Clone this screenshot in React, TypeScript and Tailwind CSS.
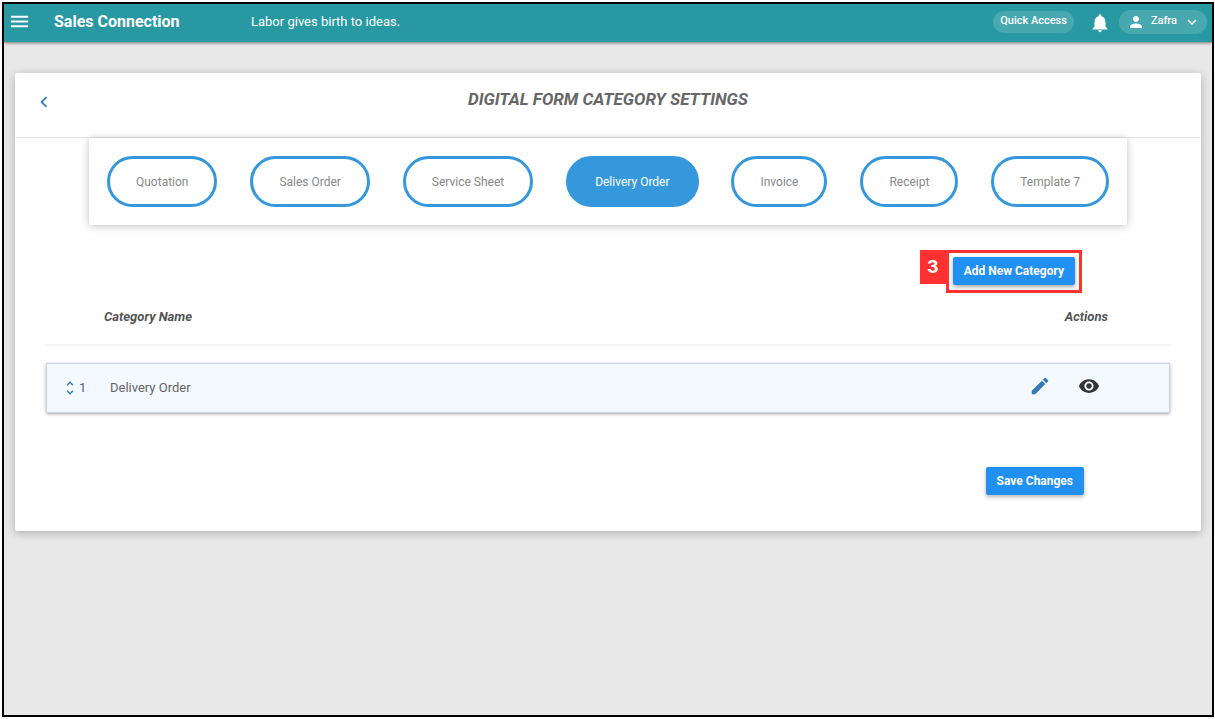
import React, { useState } from "react";
import {
  MdChevronLeft,
  MdEdit,
  MdExpandMore,
  MdMenu,
  MdNotifications,
  MdPerson,
  MdRemoveRedEye,
  MdUnfoldMore,
} from "react-icons/md";

const TABS = [
  "Quotation",
  "Sales Order",
  "Service Sheet",
  "Delivery Order",
  "Invoice",
  "Receipt",
  "Template 7",
];

const CATEGORIES = [{ id: 1, name: "Delivery Order" }];

const TopBar: React.FC = () => (
  <header className="relative flex h-[38px] items-center bg-[#2899a3] pb-[3px] pl-1 pr-[5px] text-white shadow-[0_1px_3px_rgba(0,0,0,0.5)]">
    <button type="button" aria-label="Menu" className="w-[46px]">
      <MdMenu size={23} />
    </button>
    <h1 className="w-[197px] text-base font-bold">Sales Connection</h1>
    <p className="flex-1 text-[13px]">Labor gives birth to ideas.</p>

    <button
      type="button"
      className="h-[22px] rounded-full bg-white/15 px-[7px] text-[11px] font-medium"
    >
      Quick Access
    </button>
    <button type="button" aria-label="Notifications" className="ml-[15px] mr-2 pt-0.5">
      <MdNotifications size={22} />
    </button>
    <button
      type="button"
      className="flex h-6 items-center rounded-full bg-white/15 pl-2 pr-1.5 text-[11px] font-medium"
    >
      <MdPerson size={18} />
      <span className="mx-1.5">Zafra</span>
      <MdExpandMore size={18} stroke="currentColor" />
    </button>
  </header>
);

const FormTabs: React.FC = () => {
  const [active, setActive] = useState("Delivery Order");

  return (
    <nav className="mx-[74px] flex justify-between rounded-b-xs bg-white px-[18px] py-[18px] shadow-[0_1px_8px_rgba(0,0,0,0.25)]">
      {TABS.map((tab) => (
        <button
          key={tab}
          type="button"
          onClick={() => setActive(tab)}
          className={`h-[51px] rounded-full border-3 border-[#3598dc] px-[26px] text-xs ${
            tab === active ? "bg-[#3598dc] text-white" : "bg-white text-[#888]"
          }`}
        >
          {tab}
        </button>
      ))}
    </nav>
  );
};

const CategoryTable: React.FC = () => (
  <table className="mx-[31px] block text-[13px]">
    <thead className="block">
      <tr className="flex h-[53px] justify-between border-b-2 border-[#f4f4f4] pl-[58px] pr-[62px] pt-[14px] italic text-[#555]">
        <th className="font-bold">Category Name</th>
        <th className="font-bold">Actions</th>
      </tr>
    </thead>
    <tbody className="block pt-[17px]">
      {CATEGORIES.map((category) => (
        <tr
          key={category.id}
          className="flex h-[50px] items-center border border-[#c5d5ee] bg-[#f4f8ff] text-[#666] shadow-[0_1px_3px_rgba(0,0,0,0.35)]"
        >
          <td className="flex w-[63px] items-center pl-[14px] text-[#4a5a96]">
            <MdUnfoldMore size={18} className="text-[#337ab7]" />
            {category.id}
          </td>
          <td className="flex-1">{category.name}</td>
          <td className="flex gap-[27px] pb-1 pr-[69px]">
            <button type="button" aria-label="Edit" className="text-[#337ab7]">
              <MdEdit size={22} />
            </button>
            <button type="button" aria-label="View" className="text-[#333]">
              <MdRemoveRedEye size={22} />
            </button>
          </td>
        </tr>
      ))}
    </tbody>
  </table>
);

export default function App() {
  return (
    <div className="min-h-screen bg-white pb-0.5 pl-0.5 pr-px pt-0.5 font-[Roboto,sans-serif]">
      <div className="min-h-[715px] border-2 border-black bg-[#e8e8e8]">
        <TopBar />

        <main className="mx-[11px] mt-[31px] rounded-xs bg-white pb-9 shadow-[0_2px_10px_rgba(0,0,0,0.25)]">
          <div className="flex h-[65px] items-center border-b border-[#e6e6e6] pb-1.5">
            <button type="button" aria-label="Back" className="w-[58px] pl-[18px] text-[#337ab7]">
              <MdChevronLeft size={22} />
            </button>
            <h2 className="flex-1 pb-1 pr-[58px] text-center text-[17px] font-bold italic text-[#666]">
              DIGITAL FORM CATEGORY SETTINGS
            </h2>
          </div>

          <FormTabs />

          {/* Add button with its numbered step marker */}
          <div className="mt-[25px] flex items-start justify-end pr-[119px]">
            <span className="flex h-[34px] w-[26px] items-center justify-center bg-[#ff3131] font-[Inter,sans-serif] text-lg font-bold text-white">
              3
            </span>
            <div className="border-3 border-[#ff3131] p-1 pb-[5px]">
              <button
                type="button"
                className="block h-7 rounded-xs bg-[#2090f3] px-[11px] text-xs font-bold text-white shadow-[0_2px_4px_rgba(0,0,0,0.35)]"
              >
                Add New Category
              </button>
            </div>
          </div>

          <CategoryTable />

          <div className="mt-[54px] flex justify-end pr-[117px]">
            <button
              type="button"
              className="h-7 rounded-xs bg-[#2090f3] px-[11px] text-xs font-bold text-white shadow-[0_2px_4px_rgba(0,0,0,0.3)]"
            >
              Save Changes
            </button>
          </div>
        </main>
      </div>
    </div>
  );
}
